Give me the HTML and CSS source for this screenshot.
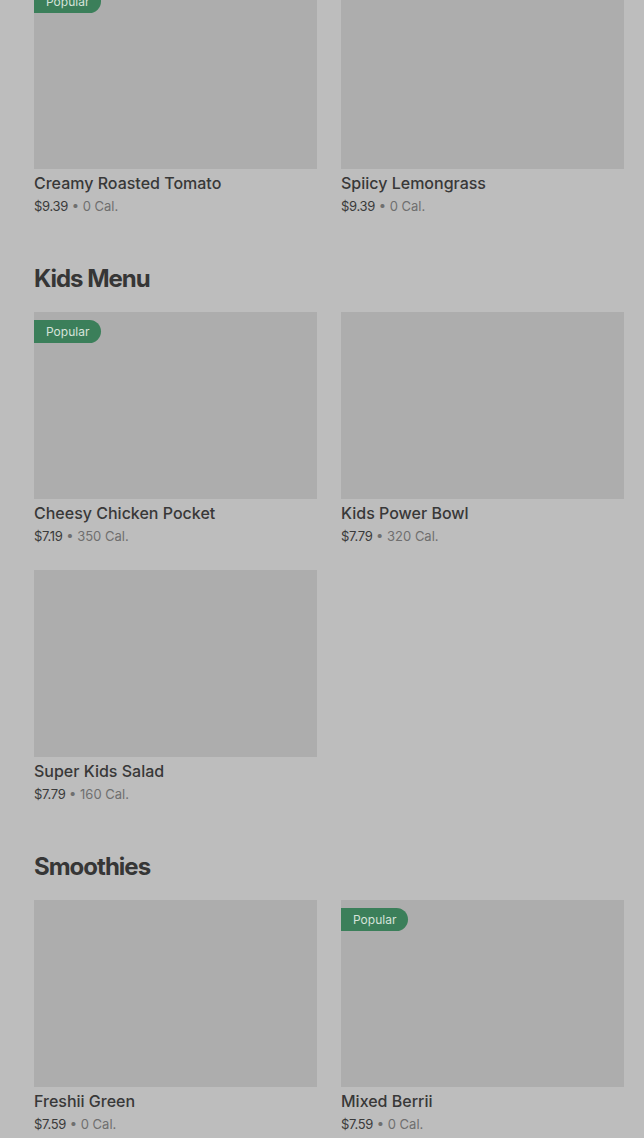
FILE: index.html
```html
<!DOCTYPE html>
<html lang="en">
<head>
<meta charset="utf-8">
<title>Menu</title>
<link rel="stylesheet" href="styles.css">
</head>
<body>
<main class="page">
  <section class="section">
    <div class="grid">
      <article class="card">
        <div class="thumb"><span class="badge">Popular</span></div>
        <h3 class="name">Creamy Roasted Tomato</h3>
        <p class="meta"><span class="price">$9.39</span> <span class="cal">• 0 Cal.</span></p>
      </article>
      <article class="card">
        <div class="thumb"></div>
        <h3 class="name">Spiicy Lemongrass</h3>
        <p class="meta"><span class="price">$9.39</span> <span class="cal">• 0 Cal.</span></p>
      </article>
    </div>
  </section>

  <section class="section">
    <h2 class="heading">Kids Menu</h2>
    <div class="grid">
      <article class="card">
        <div class="thumb"><span class="badge">Popular</span></div>
        <h3 class="name">Cheesy Chicken Pocket</h3>
        <p class="meta"><span class="price">$7.19</span> <span class="cal">• 350 Cal.</span></p>
      </article>
      <article class="card">
        <div class="thumb"></div>
        <h3 class="name">Kids Power Bowl</h3>
        <p class="meta"><span class="price">$7.79</span> <span class="cal">• 320 Cal.</span></p>
      </article>
      <article class="card">
        <div class="thumb"></div>
        <h3 class="name">Super Kids Salad</h3>
        <p class="meta"><span class="price">$7.79</span> <span class="cal">• 160 Cal.</span></p>
      </article>
    </div>
  </section>

  <section class="section">
    <h2 class="heading">Smoothies</h2>
    <div class="grid">
      <article class="card">
        <div class="thumb"></div>
        <h3 class="name">Freshii Green</h3>
        <p class="meta"><span class="price">$7.59</span> <span class="cal">• 0 Cal.</span></p>
      </article>
      <article class="card">
        <div class="thumb"><span class="badge">Popular</span></div>
        <h3 class="name">Mixed Berrii</h3>
        <p class="meta"><span class="price">$7.59</span> <span class="cal">• 0 Cal.</span></p>
      </article>
    </div>
  </section>
</main>
</body>
</html>
```

FILE: styles.css
```css
html, body {
  margin: 0;
  padding: 0;
  background: #bdbdbd;
  font-family: Inter, "Noto Sans", "Liberation Sans", sans-serif;
  overflow: hidden;
}

.page {
  margin-top: -18px;
  padding: 0 20px 0 34px;
}

.section {
  margin-bottom: 46px;
}

.heading {
  margin: 0 0 17px;
  font-size: 24px;
  line-height: 32px;
  font-weight: 700;
  letter-spacing: -1px;
  color: #363636;
}

.grid {
  display: grid;
  grid-template-columns: 283px 283px;
  column-gap: 24px;
  row-gap: 23px;
}

.thumb {
  position: relative;
  height: 187px;
  background: #adadad;
}

.badge {
  position: absolute;
  top: 8px;
  left: 0;
  height: 23px;
  padding: 0 12px;
  display: flex;
  align-items: center;
  font-size: 12px;
  color: #d6e3da;
  background: #3b7f5a;
  border-radius: 0 12px 12px 0;
}

.name {
  margin: 2px 0 0;
  font-size: 16px;
  line-height: 24px;
  font-weight: 500;
  color: #383838;
}

.meta {
  margin: 0;
  font-size: 13px;
  line-height: 22px;
}

.price {
  color: #3a3a3a;
  letter-spacing: -0.3px;
}

.cal {
  color: #6f6f6f;
}
```
